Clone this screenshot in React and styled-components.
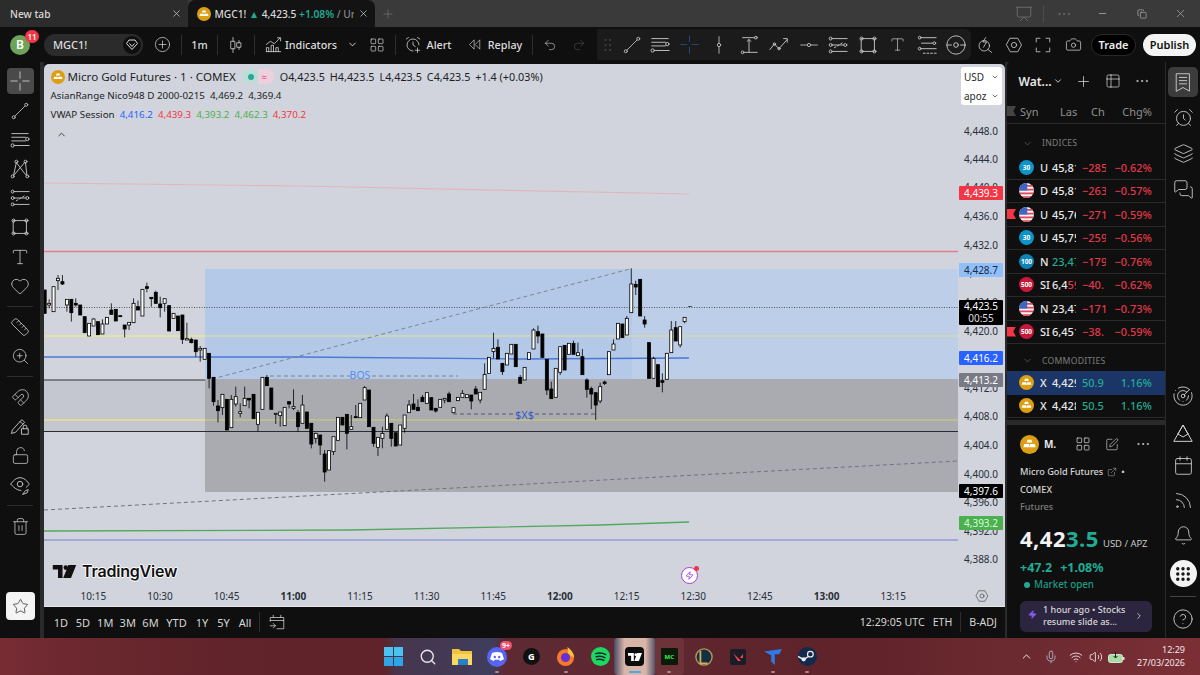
import React from "react";
import styled, { createGlobalStyle } from "styled-components";
import {
  X, Plus, ChevronDown, ChevronRight, ChevronUp, Undo2, Redo2, Camera, Minus, Copy, AlarmClock, Layers, MessagesSquare,
  Radar, Calendar, Rss, Bell, Grip, CircleHelp, Star, Trash2, Magnet, LockOpen, Ruler, ZoomIn, Heart, Type,
  LayoutGrid, SquarePen, ExternalLink, Mic, Wifi, Volume2, Search, Zap, Table2, Presentation, Ellipsis
} from "lucide-react";

const Global = createGlobalStyle`
  html, body { margin: 0; padding: 0; background: #0f0f0f; overflow: hidden; }
  body { font-family: "Noto Sans", "Open Sans", Arial, sans-serif; }
  * { box-sizing: border-box; }
`;

const Page = styled.div`
  width: 1200px; height: 675px; display: flex; flex-direction: column; background: #0f0f0f; overflow: hidden;
`;

/* ---------- browser tabs ---------- */
const TabStrip = styled.div`
  height: 27px; flex: none; display: flex; align-items: stretch; background: #3a3a3a; color: #d8d8d8; font-size: 10.200px;
`;
const Tab = styled.div`
  width: 187.5px; flex: none; display: flex; align-items: center; gap: 4px; padding: 0 6px 0 ${p => p.$pl}px;
  background: ${p => (p.$active ? "#131313" : "#2c2c2c")}; border-radius: ${p => (p.$active ? "7px 7px 0 0" : "0")};
  font-weight: 500; white-space: nowrap; overflow: hidden;
`;
const TabLabel = styled.span`
  flex: 1; overflow: hidden; white-space: nowrap; color: ${p => p.$c || "inherit"};
`;
const Colored = styled.span`
  color: ${p => p.$c}; font-weight: ${p => p.$b || "inherit"};
`;
const WindowControls = styled.div`
  margin-left: auto; display: flex; align-items: center; color: #b8b8b8;
`;
const WinSlot = styled.div`
  width: ${p => p.$w}px; display: flex; justify-content: center; align-items: center; color: ${p => p.$c || "inherit"};
`;
const WinDivider = styled.div`
  width: 1px; height: 18px; background: #4c4c4c;
`;
const NewTab = styled.div`
  width: 26px; display: flex; align-items: center; justify-content: center; color: #777;
`;

/* ---------- top toolbar ---------- */
const Toolbar = styled.div`
  height: 35px; flex: none; display: flex; align-items: center; background: #0f0f0f; color: #dcdcdc; font-size: 10.8px; font-weight: 500;
`;
const Avatar = styled.div`
  position: relative; width: 20px; height: 20px; margin: 0 14px 0 10px; border-radius: 50%; background: #6ea35a; color: #fff; flex: none;
  display: flex; align-items: center; justify-content: center; font-size: 12px; font-weight: 600;
`;
const AvatarBadge = styled.span`
  position: absolute; top: -5px; right: -9px; width: 14px; height: 13px; border-radius: 7px; background: #f23645; color: #fff;
  font-size: 8px; display: flex; align-items: center; justify-content: center; font-weight: 600;
`;
const SymbolPill = styled.div`
  width: 99px; height: 22px; flex: none; border-radius: 11px; background: #2b2b2b; display: flex; align-items: center;
  justify-content: space-between; padding: 0 2px 0 9px; font-size: 11px; color: #ddd;
`;
const DiamondDot = styled.span`
  width: 18px; height: 18px; border-radius: 50%; background: #0f0f0f; display: flex; align-items: center; justify-content: center;
`;
const Slot = styled.div`
  width: ${p => p.$w}px; flex: none; display: flex; align-items: center; justify-content: center; gap: 4px; height: 100%;
  padding-left: ${p => p.$pl || 0}px; color: ${p => p.$c || "inherit"}; white-space: nowrap;
`;
const VBar = styled.div`
  width: 1px; height: 20px; flex: none; background: #2e2e2e;
`;
const DrawGroup = styled.div`
  margin-left: auto; width: 374px; height: 31px; flex: none; background: #1b1b1b; border-radius: 0 6px 6px 0; display: flex; align-items: center;
  color: #c8c8c8;
`;
const TradeBtn = styled.div`
  width: 45px; height: 22px; flex: none; border-radius: 11px; background: #000; border: 1px solid #2a2a2a; color: #eee;
  display: flex; align-items: center; justify-content: center; font-weight: 600; font-size: 11px; margin-left: 3px;
`;
const PublishBtn = styled(TradeBtn)`
  width: 53px; background: #f4f4f4; color: #111; border: none; margin: 0 4px 0 7px;
`;

/* ---------- main ---------- */
const Main = styled.div`
  flex: 1; min-height: 0; display: flex; background: #2a2a2a;
`;
const LeftBar = styled.div`
  width: 40px; margin-right: 4px; background: #0f0f0f; display: flex; flex-direction: column; align-items: center; color: #c8c8c8; padding-top: 6px; flex: none;
`;
const ToolSlot = styled.div`
  width: 27px; height: ${p => p.$h || 29.2}px; flex: none; display: flex; align-items: center; justify-content: center;
  background: ${p => (p.$active ? "#4a4a4a" : "transparent")}; border-radius: 4px;
`;
const HBar = styled.div`
  width: 26px; height: 1px; flex: none; background: #2e2e2e; margin: 5.500px 0;
`;
const StarTile = styled.div`
  width: 29px; height: 28px; margin-top: auto; margin-bottom: 18px; background: #f4f4f4; color: #222; border-radius: 4px; display: flex;
  align-items: center; justify-content: center; flex: none;
`;
const ChartCol = styled.div`
  width: 961px; flex: none; display: flex; flex-direction: column; padding-top: 2px; background: #0f0f0f;
`;
const ChartBox = styled.div`
  height: 522px; flex: none; position: relative; background: #d1d4dc; border-radius: 5px 5px 0 0; overflow: hidden;
`;
const ChartSvg = styled.svg`
  display: block; width: 961px; height: 522px; font-family: "Noto Sans", Arial, sans-serif;
`;
const Legend = styled.div`
  position: absolute; left: 6.500px; top: 3px; color: #1d1f26; display: flex; flex-direction: column;
`;
const LegendRow = styled.div`
  height: 19px; display: flex; align-items: center; gap: ${p => p.$g || 5}px; white-space: nowrap; font-size: ${p => p.$fs || 9.8}px;
`;
const StatusPill = styled.span`
  width: 32px; height: 15px; border-radius: 7px; background: linear-gradient(90deg, #bfdcd8 50%, #ecd0de 50%); display: flex; align-items: center; justify-content: space-around;
  padding: 0 3px; font-size: 10px; color: #ee4f80; margin: 0 3px 0 3px;
`;
const GreenDot = styled.span`
  width: 6px; height: 6px; border-radius: 50%; background: #22ab94; flex: none;
`;
const CollapseBtn = styled.div`
  width: 18px; height: 14px; margin-top: 3px; margin-left: 2px; display: flex; align-items: center; justify-content: center; color: #333;
`;
const UnitBox = styled.div`
  position: absolute; right: 3px; top: 3px; width: 41px; height: 38px; background: #fff; border-radius: 3px; padding: 0 3px;
  font-size: 10px; color: #2a2a2a; display: flex; flex-direction: column; justify-content: space-around;
`;
const UnitRow = styled.div`
  display: flex; align-items: center; justify-content: space-between;
`;
const LogoWrap = styled.div`
  position: absolute; left: 8px; top: 497px; display: flex; align-items: center; gap: 5px; color: #111;
`;
const LogoText = styled.span`
  font-family: Inter, "Noto Sans", sans-serif; font-size: 16px; font-weight: 600; letter-spacing: -0.2px;
  text-shadow: 1px 0 0 #fff, -1px 0 0 #fff, 0 1px 0 #fff, 0 -1px 0 #fff;
`;
const Flash = styled.div`
  position: absolute; left: 637px; top: 503px; width: 17px; height: 17px; border-radius: 50%; background: #fff; border: 1.500px solid #a63ad0;
  display: flex; align-items: center; justify-content: center; color: #8a2be2;
`;
const FlashDot = styled.span`
  position: absolute; top: -2px; right: -2px; width: 5px; height: 5px; border-radius: 50%; background: #f23645;
`;
const TimeAxis = styled.div`
  height: 21px; flex: none; display: flex; align-items: center; background: #d1d4dc; color: #2a2e39; font-size: 10px; padding-left: 16px;
  border-bottom: 1px solid #e6e8ee;
`;
const TimeLabel = styled.span`
  width: 66.67px; text-align: center; flex: none; font-weight: ${p => (p.$b ? 700 : 400)};
`;
const AxisGear = styled.span`
  margin-left: auto; margin-right: 16px; display: flex; color: #333;
`;
const BottomBar = styled.div`
  height: 30px; flex: none; background: #0f0f0f; display: flex; align-items: center; color: #d6d6d6; font-size: 11px; padding-left: 6px;
`;
const Range = styled.span`
  width: ${p => p.$w}px; text-align: center; flex: none;
`;
const BottomRight = styled.div`
  margin-left: auto; display: flex; align-items: center; gap: 8px; padding-right: 8px; font-size: 10.600px; white-space: nowrap;
`;

/* ---------- watchlist ---------- */
const Watch = styled.div`
  width: 158px; margin-left: 2px; flex: none; background: #0f0f0f; border-radius: 4px 0 0 0; display: flex; flex-direction: column; color: #e8e8e8; overflow: hidden;
`;
const WatchHead = styled.div`
  height: 36px; flex: none; display: flex; align-items: center; font-size: 12px; font-weight: 600; padding-left: 13px; margin-top: 1px;
`;
const ColHead = styled.div`
  position: relative; height: 25px; flex: none; display: grid; grid-template-columns: 40px 31px 1fr auto; padding: 0 13px; align-items: center; color: #8f8f8f; font-size: 11px;
  border-bottom: 1px solid #2a2a2a;
`;
const ColFlag = styled.span`
  position: absolute; left: 0; top: 7px; width: 9px; height: 10px; background: #444; clip-path: polygon(0 0, 100% 0, 70% 50%, 100% 100%, 0 100%);
`;
const Section = styled.div`
  height: ${p => p.$h}px; flex: none; display: flex; align-items: center; gap: 9px; padding: 6px 0 0 15px; color: #7c7c7c; font-size: 8.700px; letter-spacing: .2px;
`;
const Row = styled.div`
  position: relative; height: 23.500px; flex: none; display: grid; grid-template-columns: 16px 17px 30px 30px 1fr; align-items: center; padding: 0 13px 0 12px;
  border-bottom: ${p => (p.$sel ? "none" : "1px solid #2a2a2a")}; background: ${p => (p.$sel ? "#1a3566" : "transparent")}; font-size: 11px; font-weight: 500; white-space: nowrap;
`;
const RowSym = styled.span`
  padding-left: 5px; overflow: hidden; width: 16px; font-weight: 500;
`;
const RowClip = styled.span`
  overflow: hidden; width: 24px;
`;
const RowPct = styled.span`
  text-align: right; color: ${p => p.$c};
`;
const RowFlag = styled.span`
  position: absolute; left: 0; top: 6px; width: 9px; height: 10px; background: #f23645; clip-path: polygon(0 0, 100% 0, 70% 50%, 100% 100%, 0 100%);
`;
const RoundIcon = styled.span`
  width: 15px; height: 15px; border-radius: 50%; background: ${p => p.$bg}; color: #fff; font-size: 6.500px; font-weight: 700; display: flex;
  align-items: center; justify-content: center; overflow: hidden;
`;
const Thick = styled.div`
  height: 5px; margin-top: 2px; flex: none; background: #2a2a2a;
`;
const Details = styled.div`
  flex: 1; padding: 9px 13px 0 13px; display: flex; flex-direction: column;
`;
const DetailHead = styled.div`
  height: 20px; flex: none; display: flex; align-items: center; font-size: 10px; font-weight: 700;
`;
const DetailName = styled.div`
  margin-top: 9px; font-size: 9.200px; line-height: 17.500px; color: #d6d6d6; font-weight: 500; flex: none;
`;
const DetailName2 = styled.div`
  display: flex; align-items: center; gap: 4px;
`;
const Muted = styled.div`
  color: #7c7c7c;
`;
const BigPrice = styled.div`
  margin-top: 10px; flex: none; display: flex; align-items: baseline; font-size: 22px; font-weight: 700; color: #f2f2f2; letter-spacing: .5px; font-family: "Open Sans", sans-serif; line-height: 24px; white-space: nowrap;
`;
const BigUnit = styled.span`
  font-size: 9.500px; font-weight: 500; margin-left: 4px; letter-spacing: 0; color: #d0d0d0;
`;
const Change = styled.div`
  margin-top: 4px; flex: none; color: #22ab94; font-size: 12.500px; line-height: 15px; font-weight: 700; display: flex; gap: 8px;
`;
const OpenRow = styled.div`
  margin-top: 3px; flex: none; padding-left: 4px; color: #1c9a85; font-size: 9.800px; line-height: 14px; font-weight: 500; display: flex; align-items: center; gap: 4px;
`;
const News = styled.div`
  margin-top: 9px; height: 31px; flex: none; border-radius: 6px; background: #2c2540; display: flex; align-items: center; padding: 0 8px 0 8px; gap: 6px; font-size: 9px; line-height: 12.500px; color: #d8d8d8; font-weight: 500; white-space: nowrap;
`;
const Grow = styled.div`
  flex: 1;
`;

/* ---------- right rail ---------- */
const Rail = styled.div`
  flex: 1; border-left: 1px solid #2a2a2a; background: #0f0f0f; color: #cfcfcf; display: flex; flex-direction: column; align-items: center; padding-top: 5px;
`;
const RailSlot = styled.div`
  width: 30px; height: ${p => p.$h || 35}px; flex: none; display: flex; align-items: center; justify-content: center; border-radius: 5px; background: ${p => (p.$active ? "#3c3c3c" : "transparent")};
`;
const RailSpacer = styled.div`
  height: ${p => p.$h}px; flex: none;
`;
const GripCircle = styled.div`
  width: 27px; height: 27px; border-radius: 50%; background: #f4f4f4; color: #111; display: flex; align-items: center; justify-content: center; flex: none; margin: 7px 0 9px;
`;
const RailLine = styled.div`
  width: 26px; height: 1px; background: #444; flex: none; margin-bottom: 4px;
`;

/* ---------- taskbar ---------- */
const Taskbar = styled.div`
  height: 37px; flex: none; display: flex; align-items: center; padding-left: 376px; color: #eee;
  background: linear-gradient(90deg, #772c34 0%, #6a272e 8%, #5f2329 22%, #5f2329 32%, #47354c 33%, #3f3d5c 41%, #5d2a34 42%, #5f2329 70%, #6b2a30 85%, #7b2f36 100%);
`;
const TaskIcon = styled.div`
  position: relative; width: 34.500px; height: 37px; flex: none; display: flex; align-items: center; justify-content: center;
  &::before {
    content: ""; position: absolute; top: 0; bottom: 0; left: ${p => p.$gl || 0}px; right: ${p => p.$gr || 0}px; border-radius: 4px;
    background: ${p => p.$bg || "transparent"};
  }
  & > * { position: relative; }
`;
const Pip = styled.span`
  position: absolute !important; bottom: 2px; left: 50%; margin-left: ${p => (p.$on ? -6 : -2)}px; width: ${p => (p.$on ? 12 : 4)}px; height: 2px; border-radius: 1px; background: ${p => (p.$on ? "#4aa8e8" : "#a88")};
`;
const Tile = styled.span`
  width: ${p => p.$s || 17}px; height: ${p => p.$s || 17}px; border-radius: ${p => p.$r ?? 3}px; background: ${p => p.$bg}; color: ${p => p.$c || "#fff"}; display: flex; align-items: center; justify-content: center;
  font-size: ${p => p.$fs || 8}px; font-weight: 800; overflow: hidden;
`;
const CountBadge = styled.span`
  position: absolute !important; top: 3px; right: 2px; background: #f0506e; color: #fff; font-size: 7px; border-radius: 6px; padding: 0 2px; font-weight: 700;
`;
const Tray = styled.div`
  margin-left: auto; display: flex; align-items: center; padding-right: 15px; color: #f0e6e6;
`;
const TraySlot = styled.div`
  width: ${p => p.$w || 24}px; display: flex; justify-content: center; align-items: center;
`;
const Clock = styled.div`
  width: 50px; margin-left: 7px; text-align: right; font-size: 9px; line-height: 12.500px; white-space: nowrap;
`;

/* ---------- drawings ---------- */
const I = ({ s = 20, sw = 1, vb = "0 0 24 24", children }) => (
  <svg width={s} height={s} viewBox={vb} fill="none" stroke="currentColor" strokeWidth={sw} strokeLinecap="round" strokeLinejoin="round">{children}</svg>
);
const Gold = ({ s = 15 }) => (
  <svg width={s} height={s} viewBox="0 0 20 20">
    <circle cx="10" cy="10" r="10" fill="#dc9f14" />
    <path d="M8 5h4l1 3H7zM4.500 9.500h5l.5 3.500H3.500zM10.500 9.500h5l1 3.500h-6.500z" fill="#fff" />
  </svg>
);
const USFlag = () => (
  <svg width="15" height="15" viewBox="0 0 20 20">
    <defs><clipPath id="f"><circle cx="10" cy="10" r="10" /></clipPath></defs>
    <g clipPath="url(#f)">
      <rect width="20" height="20" fill="#f4f4f4" />
      <path d="M0 2.500h20v2.500H0zM0 7.500h20V10H0zM0 12.500h20V15H0zM0 17.500h20V20H0z" fill="#e0455a" />
      <rect width="11" height="10" fill="#3a66c8" />
    </g>
  </svg>
);
const TVGlyph = ({ w = 22, h = 13, c = "currentColor" }) => (
  <svg width={w} height={h} viewBox="0 0 36 20" fill={c}>
    <path d="M0 0h15v20H8V7H0zM24 0h12l-8 20H16z" />
    <circle cx="20" cy="4" r="3.500" />
  </svg>
);
const Crosshair = ({ c = "currentColor", s = 22 }) => (
  <I s={s}><g stroke={c}><path d="M12 2v7M12 15v7M2 12h7M15 12h7" /></g></I>
);
const HexGear = ({ s = 18 }) => (<I s={s}><path d="M7 3h10l5 9-5 9H7l-5-9z" /><circle cx="12" cy="12" r="3.500" /></I>);
const TrendLine = ({ s = 20 }) => (<I s={s}><circle cx="4.500" cy="19.500" r="1.800" /><circle cx="19.500" cy="4.500" r="1.800" /><path d="M6 18 18 6" /></I>);
const Channel = ({ s = 22 }) => (<I s={s}><path d="M3 5h18M3 9h15M3 13h15M6 18h16" /><circle cx="20" cy="11" r="1.800" /><circle cx="4" cy="18" r="1.800" /></I>);
const Pitch = ({ s = 22 }) => (<I s={s}><circle cx="8" cy="4" r="1.600" /><circle cx="18" cy="4" r="1.600" /><circle cx="4" cy="20" r="1.600" /><circle cx="20" cy="20" r="1.600" /><path d="M8 5 5 19M18 5l1.500 14M8 5l10 13M17 5 6 18" /></I>);
const Fib = ({ s = 22 }) => (<I s={s}><circle cx="4" cy="5" r="1.600" /><circle cx="4" cy="12" r="1.600" /><circle cx="4" cy="19" r="1.600" /><circle cx="20" cy="12" r="1.600" /><path d="M6 5h16M6 12h12M6 19h16" /><path d="M8 15l10-6" strokeDasharray="2 2" /></I>);
const Rect = ({ s = 22 }) => (<I s={s}><rect x="5" y="5" width="14" height="14" /><circle cx="5" cy="5" r="1.700" /><circle cx="19" cy="5" r="1.700" /><circle cx="5" cy="19" r="1.700" /><circle cx="19" cy="19" r="1.700" /></I>);
const Measure = ({ s = 22 }) => (<I s={s}><path d="M5 4h13M12 6v14M7 20h14" /><circle cx="19.500" cy="4" r="1.500" /><circle cx="5" cy="20" r="1.500" /><path d="m10 8 2-2 2 2" /></I>);
const Poly = ({ s = 22 }) => (<I s={s}><path d="M2 17l5-6 5 5 9-10M17 5h4v4" /><circle cx="7" cy="11" r="1.300" /><circle cx="12" cy="16" r="1.300" /></I>);
const Dash = ({ s = 20 }) => (<I s={s}><path d="M2 12h7M15 12h7" /><circle cx="12" cy="12" r="2" /></I>);
const VLine = ({ s = 20 }) => (<I s={s}><path d="M12 2v8M12 14v8" /><circle cx="12" cy="12" r="2" /></I>);
const Candle = ({ s = 18 }) => (<I s={s}><path d="M8 2v5M8 17v5M16 6v3M16 15v3" /><rect x="5.500" y="7" width="5" height="10" /><rect x="13.500" y="9" width="5" height="6" /></I>);
const Indicator = ({ s = 19 }) => (<I s={s}><path d="M3 12l5-4 5 3 7-7M17 3.500h4v4" /><path d="M3 21v-5h3v5M9 21v-8h3v8M15 21v-5h3v5M3 21h18" /></I>);
const Replay = ({ s = 15 }) => (<I s={s}><path d="M11 5 4 12l7 7zM20 5l-7 7 7 7z" /></I>);
const AlertI = ({ s = 18 }) => (<I s={s}><path d="M20 12a8 8 0 1 0-8 8" /><path d="M12 8v4l3 2M3 4l3-2M21 4l-3-2M18 16v6M15 19h6" /></I>);
const Lab = ({ s = 18 }) => (<I s={s}><circle cx="11" cy="13" r="7" /><path d="m16 18 5 4M13 2l-4 6h5l-4 7" /></I>);
const Watchlist = ({ s = 22 }) => (<I s={s}><path d="M5 3h14v19l-7-4-7 4z" /><path d="M8 7h8M8 10.500h8M8 14h8" /></I>);
const PenLock = ({ s = 22 }) => (<I s={s}><path d="M4 16 14 5l3 3L7 19l-4 1zM12 7l3 3" /><rect x="14" y="15" width="7" height="6" /><path d="M15.500 15v-2a2 2 0 0 1 4 0v2" /></I>);
const EyeBrush = ({ s = 22 }) => (<I s={s}><path d="M2 11s4-7 10-7 10 7 10 7-1 2-3 3.500M13 18c-6 0-11-7-11-7" /><circle cx="12" cy="11" r="3" /><path d="M15 22l3-4 3-1-1 3z" /></I>);
const Target = ({ s = 22 }) => (<I s={s}><circle cx="12" cy="12" r="10" /><circle cx="12" cy="12" r="2.500" /><path d="M2 12h5M17 12h5" /></I>);
const FibList = ({ s = 22 }) => (<I s={s}><path d="M6 4h16M6 10h12M6 16h16" /><circle cx="4" cy="4" r="1.500" /><circle cx="20" cy="10" r="1.500" /><circle cx="4" cy="16" r="1.500" /><path d="M8 21h14" strokeDasharray="2 2" /></I>);
const Mountains = ({ s = 24 }) => (<I s={s}><path d="M3 22 12 6l9 16zM7 15l5-9 5 9" /><path d="M7 15l5 3 5-3" /></I>);
const CalArrow = ({ s = 18 }) => (<I s={s}><path d="M3 11V6h18v15H12M7 3v3M17 3v3M3 10h18M3 17h7M7 14l3 3-3 3" /></I>);

/* ---------- chart data (page pixels) ---------- */
const A = [[90,160,90,160,0],[118,145,130,135,1],[80,155,80,155,1],[45,90,55,62,1],[45,75,65,72,0],[118,155,118,135,1],[118,185,118,158,0],[115,140,130,135,0],[135,165,135,165,0],[170,218,170,218,0],[190,228,190,228,1],[175,198,177,198,1],[185,224,185,224,0],[178,222,192,222,1],[172,192,172,192,1],[130,163,150,163,0],[148,183,148,183,0],[167,168,167,168,0],[195,232,195,207,0],[187,210,187,195,1],[115,188,130,188,1],[122,150,140,150,0],[88,168,88,168,1],[68,97,80,85,0],[112,140,112,116,0],[92,130,97,130,0],[110,172,132,143,0],[116,155,116,130,1],[137,213,137,213,0],[160,175,160,175,1],[168,212,168,212,0],[165,252,165,238,0],[188,240,236,240,1],[233,250,238,248,0],[240,290,240,275,0],[258,305,265,270,1],[265,298,265,298,1],[280,385,280,355,0],[352,437,352,425,0],[420,487,438,452,0],[403,465,403,443,1],[418,510,418,510,0],[405,503,418,503,1],[380,440,410,432,1],[430,472,455,460,1],[380,437,415,437,1],[415,445,415,420,0],[403,476,403,476,0],[457,514,457,493,1],[352,448,352,448,1],[345,377,352,377,0],[384,448,384,448,0],[460,492,460,463,1],[456,500,456,467,1],[442,497,442,497,1],[425,445,425,432,0],[388,450,440,445,1],[450,515,458,500,0],[405,490,435,490,1],[456,505,456,505,0],[490,565,490,552,0],[518,550,520,535,1],[525,585,525,555,0],[570,665,582,636,0],[572,630,572,630,1],[530,585,530,575,1],[472,541,472,541,1],[472,495,472,495,0],[463,568,463,520,0],[465,508,500,508,1],[435,473,470,473,0],[430,473,430,473,1],[378,420,383,420,1],[390,500,390,500,0],[502,560,502,550,0]];
const B = [[172,228,172,202,1],[140,205,160,175,1],[100,148,108,148,1],[130,200,130,175,0],[158,198,158,198,0],[135,195,135,195,1],[105,158,105,145,1],[60,98,75,98,1],[42,88,72,88,0],[58,92,82,92,0],[45,65,52,65,0],[38,70,38,70,1],[53,90,53,90,0],[85,98,85,93,0],[58,82,58,82,1],[55,70,55,60,1],[35,65,42,65,0],[83,98,83,98,1],[52,62,52,62,1],[30,52,40,52,1]];
const C = [[404,413,404,413,1],[405,448,405,423,0],[378,402,387,402,0],[397,430,397,420,1],[310,388,343,388,1],[292,340,292,340,1],[218,295,265,275,1],[238,297,262,297,0],[310,345,310,335,0],[280,315,280,315,1],[253,282,253,282,1],[253,320,253,320,0],[345,370,352,370,0],[322,360,322,360,1],[278,298,278,298,1],[205,267,210,267,1],[197,250,215,228,0],[222,292,222,292,0],[298,405,298,390,0],[365,416,387,416,0],[325,412,325,412,1],[260,345,260,337,1],[256,330,256,330,0],[250,283,250,283,1],[242,283,250,283,0],[248,287,278,287,1],[267,344,290,344,0],[355,413,360,388,0],[380,447,386,402,0],[398,480,398,435,0],[368,430,380,423,1],[362,375,366,370,0],[275,344,275,344,1],[238,270,252,270,1],[190,237,190,237,1],[192,233,192,233,0],[168,225,175,225,1],[25,158,72,158,1],[62,105,73,81,0],[58,168,58,168,0],[168,203,180,192,0],[248,355,248,355,0],[290,355,295,355,1],[314,380,314,380,0],[340,397,362,367,0],[280,358,280,358,1],[183,278,210,278,1],[183,243,203,243,0],[200,263,200,255,1],[172,190,172,185,1]];
const conv = (list, y0, start) => list.map((c, k) => ({ x: 44.67 + 4.444 * (start + k), wt: y0 + c[0] / 3, wb: y0 + c[1] / 3, bt: y0 + c[2] / 3, bb: y0 + c[3] / 3, w: c[4] }));
const candles = [...conv(A, 260, 0), ...conv(B, 380, 75), ...conv(C, 260, 95)];
const axis = [["4,448.0", 131], ["4,444.0", 159], ["4,440.0", 187], ["4,436.0", 216], ["4,432.0", 245], ["4,428.0", 273], ["4,424.0", 302], ["4,420.0", 331], ["4,412.0", 388], ["4,408.0", 416], ["4,404.0", 445], ["4,400.0", 474], ["4,396.0", 502], ["4,392.0", 531], ["4,388.0", 559]];
const badges = [["4,439.3", 193, "#f23645", "#fff"], ["4,428.7", 270, "#90bff9", "#1a2a44"], ["4,416.2", 358, "#2962ff", "#fff"], ["4,413.2", 380, "#787b86", "#fff"], ["4,397.6", 491, "#000", "#fff"], ["4,393.2", 523, "#4caf50", "#d8ffd8"]];

const Chart = () => (
  <ChartSvg viewBox="44 64 961 522">
    <rect x="44" y="380" width="161" height="51" fill="#c4c7cf" />
    <rect x="205" y="269" width="427" height="110" fill="#b4c9e8" />
    <rect x="632" y="269" width="326" height="110" fill="#bccee8" />
    <rect x="205" y="379" width="753" height="113" fill="#a9abb1" />
    <path d="M44 183 L300 186 L689 194" stroke="#e3b5bf" strokeWidth="1.200" fill="none" />
    <path d="M44 251.500H958" stroke="#de7f8a" strokeWidth="1.400" />
    <path d="M44 336H205" stroke="#e2e2a8" strokeWidth="2" />
    <path d="M205 336H958" stroke="#cdd6ba" strokeWidth="2" />
    <path d="M44 420H205" stroke="#dcdc9c" strokeWidth="2" />
    <path d="M205 420H958" stroke="#bdbd8e" strokeWidth="2" />
    <path d="M44 357 L300 357 L520 359 L689 358" stroke="#4a78d8" strokeWidth="1.400" fill="none" />
    <path d="M44 380H205" stroke="#333" strokeWidth="1.200" />
    <path d="M44 431.500H958" stroke="#2c2c30" strokeWidth="1.200" />
    <path d="M44 307.500H958" stroke="#555" strokeWidth="1" strokeDasharray="1 1.500" />
    <path d="M44 531 L350 530 L600 525 L689 522" stroke="#55a860" strokeWidth="1.300" fill="none" />
    <path d="M44 540H958" stroke="#6f7fd8" strokeWidth="1" />
    <path d="M44 510 L958 461" stroke="#70737a" strokeWidth="1" strokeDasharray="4 3" />
    <path d="M212 379 L630 269" stroke="#7d8590" strokeWidth="1" strokeDasharray="4 3" />
    <path d="M270 376H350M372 376H458" stroke="#7d8590" strokeWidth="1" strokeDasharray="4 3" />
    <path d="M453 414H515M535 414H595" stroke="#55585e" strokeWidth="1" strokeDasharray="4 3" />
    <text x="360" y="379" fontSize="10.500" textAnchor="middle" fill="#5a8ce8">BOS</text>
    <text x="524.500" y="418.500" fontSize="11" textAnchor="middle" fill="#3556c8">$X$</text>
    {candles.map((c, i) => (
      <g key={i} stroke="#000" strokeWidth="0.800">
        <path d={`M${c.x} ${c.wt}V${c.wb}`} />
        <rect x={c.x - 1.500} y={c.bt} width="3" height={Math.max(c.bb - c.bt, 1)} fill={c.w ? "#fff" : "#000"} />
      </g>
    ))}
    <path d="M688 306.500h4" stroke="#555" />
    {axis.map(([t, y]) => (
      <text key={t} x="998" y={y + 3.500} textAnchor="end" fontSize="10" fill="#2a2e39">{t}</text>
    ))}
    {badges.map(([t, y, bg, fg]) => (
      <g key={t}>
        <rect x="959" y={y - 7} width="44" height="14" fill={bg} rx="1" />
        <text x="981" y={y + 3.500} textAnchor="middle" fontSize="10" fill={fg}>{t}</text>
      </g>
    ))}
    <rect x="959" y="300" width="44" height="25" fill="#000" rx="1" />
    <text x="981" y="310" textAnchor="middle" fontSize="10" fill="#fff">4,423.5</text>
    <text x="981" y="321.500" textAnchor="middle" fontSize="10" fill="#ddd">00:55</text>
  </ChartSvg>
);

const rows = [
  { icon: "30", sym: "U", last: "45,81", ch: "−285", pct: "−0.62%" },
  { icon: "us", sym: "D", last: "45,81", ch: "−263", pct: "−0.57%" },
  { icon: "us", sym: "U", last: "45,76", ch: "−271", pct: "−0.59%", flag: true },
  { icon: "30", sym: "U", last: "45,75", ch: "−259", pct: "−0.56%" },
  { icon: "100", sym: "N", last: "23,47", ch: "−179", pct: "−0.76%", green: true },
  { icon: "500", sym: "SI", last: "6,4", lastRed: "59", ch: "−40.", pct: "−0.62%" },
  { icon: "us", sym: "N", last: "23,47", ch: "−171", pct: "−0.73%" },
  { icon: "500", sym: "SI", last: "6,451", ch: "−38.", pct: "−0.59%", flag: true },
];
const iconBg = { "30": "#0d94c8", "100": "#0d84b8", "500": "#c8193a" };
const RED = "#e0394a";
const GREEN = "#22ab94";

const times = [["10:15"], ["10:30"], ["10:45"], ["11:00", 1], ["11:15"], ["11:30"], ["11:45"], ["12:00", 1], ["12:15"], ["12:30"], ["12:45"], ["13:00", 1], ["13:15"]];
const ranges = [["1D", 22], ["5D", 22], ["1M", 22.500], ["3M", 22.500], ["6M", 23], ["YTD", 29], ["1Y", 22], ["5Y", 21], ["All", 22]];

export default function App() {
  return (
    <Page>
      <Global />
      <TabStrip>
        <Tab $pl={10}>
          <TabLabel>New tab</TabLabel>
          <X size={11} strokeWidth={1.500} />
        </Tab>
        <Tab $pl={9} $active>
          <Gold s={14} />
          <TabLabel>MGC1! <Colored $c={GREEN}>▲</Colored> 4,423.5 <Colored $c={GREEN} $b="600">+1.08%</Colored> <Colored $c="#888">/ Un</Colored></TabLabel>
          <X size={11} strokeWidth={1.500} />
        </Tab>
        <NewTab><Plus size={14} strokeWidth={1.200} /></NewTab>
        <WindowControls>
          <WinSlot $w={39} $c="#777"><Presentation size={18} strokeWidth={1} /></WinSlot>
          <WinDivider />
          <WinSlot $w={39} $c="#777"><Ellipsis size={16} strokeWidth={1} /></WinSlot>
          <WinSlot $w={39}><Minus size={11} strokeWidth={1.500} /></WinSlot>
          <WinSlot $w={39}><Copy size={10} strokeWidth={1.500} /></WinSlot>
          <WinSlot $w={39}><X size={13} strokeWidth={1.200} /></WinSlot>
        </WindowControls>
      </TabStrip>

      <Toolbar>
        <Avatar>B<AvatarBadge>11</AvatarBadge></Avatar>
        <SymbolPill>MGC1!
          <DiamondDot>
            <svg width="12" height="11" viewBox="0 0 24 22" fill="none" stroke="#ddd" strokeWidth="2"><path d="M6 2h12l5 7-11 12L1 9z" /><path d="M7 9l5 6 5-6" /></svg>
          </DiamondDot>
        </SymbolPill>
        <Slot $w={38}><I s={17} sw={1}><circle cx="12" cy="12" r="10" /><path d="M12 7v10M7 12h10" /></I></Slot>
        <VBar />
        <Slot $w={35}>1m</Slot>
        <VBar />
        <Slot $w={36}><Candle /></Slot>
        <VBar />
        <Slot $w={32} $pl={4}><Indicator /></Slot>
        <Slot $w={48}>Indicators</Slot>
        <Slot $w={34}><ChevronDown size={11} /></Slot>
        <Slot $w={16}><LayoutGrid size={16} strokeWidth={1} /></Slot>
        <Slot $w={10} />
        <VBar />
        <Slot $w={31} $pl={3}><AlertI /></Slot>
        <Slot $w={24}>Alert</Slot>
        <Slot $w={38} $pl={8}><Replay /></Slot>
        <Slot $w={32}>Replay</Slot>
        <Slot $w={11} />
        <VBar />
        <Slot $w={34}><Undo2 size={14} strokeWidth={1} /></Slot>
        <Slot $w={24} $c="#555"><Redo2 size={14} strokeWidth={1} /></Slot>

        <DrawGroup>
          <Slot $w={21.500} $c="#444">
            <svg width="8" height="14" viewBox="0 0 8 14" fill="currentColor"><circle cx="1.500" cy="2" r="1" /><circle cx="6" cy="2" r="1" /><circle cx="1.500" cy="7" r="1" /><circle cx="6" cy="7" r="1" /><circle cx="1.500" cy="12" r="1" /><circle cx="6" cy="12" r="1" /></svg>
          </Slot>
          <Slot $w={26.500}><TrendLine /></Slot>
          <Slot $w={29.500}><Channel /></Slot>
          <Slot $w={30}><Crosshair c="#2a4a8c" s={21} /></Slot>
          <Slot $w={29.500}><VLine /></Slot>
          <Slot $w={30}><Measure /></Slot>
          <Slot $w={30}><Poly /></Slot>
          <Slot $w={29}><Dash /></Slot>
          <Slot $w={29.500}><Fib /></Slot>
          <Slot $w={30}><Rect /></Slot>
          <Slot $w={29}><Type size={17} strokeWidth={1} /></Slot>
          <Slot $w={30}><FibList /></Slot>
          <Slot $w={29.500}><Target /></Slot>
        </DrawGroup>
        <Slot $w={28.500}><Lab /></Slot>
        <Slot $w={29}><HexGear /></Slot>
        <Slot $w={29.500}>
          <I s={18}><path d="M3 8V3h5M16 3h5v5M21 16v5h-5M8 21H3v-5" /></I>
        </Slot>
        <Slot $w={30}><Camera size={17} strokeWidth={1} /></Slot>
        <TradeBtn>Trade</TradeBtn>
        <PublishBtn>Publish</PublishBtn>
      </Toolbar>

      <Main>
        <LeftBar>
          <ToolSlot $active $h={26}><Crosshair /></ToolSlot>
          <RailSpacer $h={2} />
          <ToolSlot><TrendLine /></ToolSlot>
          <ToolSlot><Channel /></ToolSlot>
          <ToolSlot><Pitch /></ToolSlot>
          <ToolSlot><Fib /></ToolSlot>
          <ToolSlot><Rect /></ToolSlot>
          <ToolSlot><Type size={20} strokeWidth={1} /></ToolSlot>
          <ToolSlot><Heart size={20} strokeWidth={1} /></ToolSlot>
          <HBar />
          <ToolSlot><Ruler size={20} strokeWidth={1} /></ToolSlot>
          <ToolSlot><ZoomIn size={19} strokeWidth={1} /></ToolSlot>
          <HBar />
          <ToolSlot><Magnet size={19} strokeWidth={1} /></ToolSlot>
          <ToolSlot><PenLock /></ToolSlot>
          <ToolSlot><LockOpen size={19} strokeWidth={1} /></ToolSlot>
          <ToolSlot><EyeBrush /></ToolSlot>
          <HBar />
          <ToolSlot><Trash2 size={19} strokeWidth={1} /></ToolSlot>
          <StarTile><Star size={17} strokeWidth={1} /></StarTile>
        </LeftBar>

        <ChartCol>
          <ChartBox>
            <Chart />
            <Legend>
              <LegendRow $fs={11.600} $g={3}>
                <Gold s={14} />
                <span>Micro Gold Futures · 1 · COMEX</span>
                <StatusPill><GreenDot />≈</StatusPill>
                <LegendRow $fs={10.800} $g={5}>
                  <span>O4,423.5</span><span>H4,423.5</span><span>L4,423.5</span><span>C4,423.5</span><span>+1.4 (+0.03%)</span>
                </LegendRow>
              </LegendRow>
              <LegendRow>
                <span>AsianRange Nico948 D 2000-0215</span><span>4,469.2</span><span>4,369.4</span>
              </LegendRow>
              <LegendRow>
                <span>VWAP Session</span>
                <Colored $c="#2962ff">4,416.2</Colored>
                <Colored $c="#f23645">4,439.3</Colored>
                <Colored $c="#4caf50">4,393.2</Colored>
                <Colored $c="#4caf50">4,462.3</Colored>
                <Colored $c="#f23645">4,370.2</Colored>
              </LegendRow>
              <CollapseBtn><ChevronUp size={11} /></CollapseBtn>
            </Legend>
            <UnitBox>
              <UnitRow>USD <ChevronDown size={8} /></UnitRow>
              <UnitRow>apoz <ChevronDown size={8} /></UnitRow>
            </UnitBox>
            <LogoWrap><TVGlyph w={25} h={13} /><LogoText>TradingView</LogoText></LogoWrap>
            <Flash><Zap size={9} /><FlashDot /></Flash>
          </ChartBox>
          <TimeAxis>
            {times.map(([t, b]) => <TimeLabel key={t} $b={b}>{t}</TimeLabel>)}
            <AxisGear><HexGear s={14} /></AxisGear>
          </TimeAxis>
          <BottomBar>
            {ranges.map(([t, w]) => <Range key={t} $w={w}>{t}</Range>)}
            <Slot $w={3} />
            <VBar />
            <Slot $w={34}><CalArrow /></Slot>
            <BottomRight>
              <span>12:29:05 UTC</span><span>ETH</span><VBar /><span>B-ADJ</span>
            </BottomRight>
          </BottomBar>
        </ChartCol>

        <Watch>
          <WatchHead>
            <Slot $w={30}>Wat...</Slot>
            <Slot $w={16}><ChevronDown size={10} /></Slot>
            <Slot $w={34}><Plus size={17} strokeWidth={1} /></Slot>
            <Slot $w={25}><Table2 size={16} strokeWidth={1} /></Slot>
            <Slot $w={34}><Ellipsis size={16} strokeWidth={1} /></Slot>
          </WatchHead>
          <ColHead><ColFlag /><span>Syn</span><span>Las</span><span>Ch</span><span>Chg%</span></ColHead>
          <Section $h={32}><ChevronDown size={11} strokeWidth={1.200} />INDICES</Section>
          {rows.map((r, i) => (
            <Row key={i}>
              {r.flag && <RowFlag />}
              {r.icon === "us" ? <USFlag /> : <RoundIcon $bg={iconBg[r.icon]}>{r.icon}</RoundIcon>}
              <RowSym>{r.sym}</RowSym>
              <RowClip><Colored $c={r.green ? GREEN : "#e8e8e8"}>{r.last}</Colored>{r.lastRed && <Colored $c={RED}>{r.lastRed}</Colored>}</RowClip>
              <RowClip><Colored $c={RED}>{r.ch}</Colored></RowClip>
              <RowPct $c={RED}>{r.pct}</RowPct>
            </Row>
          ))}
          <Section $h={27}><ChevronDown size={11} strokeWidth={1.200} />COMMODITIES</Section>
          <Row $sel>
            <Gold s={15} /><RowSym>X</RowSym><RowClip>4,429</RowClip><RowClip><Colored $c={GREEN}>50.9</Colored></RowClip><RowPct $c={GREEN}>1.16%</RowPct>
          </Row>
          <Row>
            <Gold s={15} /><RowSym>X</RowSym><RowClip>4,428</RowClip><RowClip><Colored $c={GREEN}>50.5</Colored></RowClip><RowPct $c={GREEN}>1.16%</RowPct>
          </Row>
          <Thick />
          <Details>
            <DetailHead>
              <Gold s={19} />
              <Slot $w={22}>M.</Slot>
              <Slot $w={44}><LayoutGrid size={16} strokeWidth={1} /></Slot>
              <Slot $w={14}><SquarePen size={15} strokeWidth={1} /></Slot>
              <Slot $w={33} $pl={15}><Ellipsis size={16} strokeWidth={1} /></Slot>
            </DetailHead>
            <DetailName>
              <DetailName2>Micro Gold Futures <ExternalLink size={10} strokeWidth={1} /> •</DetailName2>
              <div>COMEX</div>
              <Muted>Futures</Muted>
            </DetailName>
            <BigPrice>4,42<Colored $c={GREEN}>3.5</Colored><BigUnit>USD / APZ</BigUnit></BigPrice>
            <Change><span>+47.2</span><span>+1.08%</span></Change>
            <OpenRow><GreenDot />Market open</OpenRow>
            <News>
              <Colored $c="#8a5cf0"><Zap size={9} fill="currentColor" /></Colored>
              <Grow>
                <div>1 hour ago • Stocks</div>
                <div>resume slide as...</div>
              </Grow>
              <ChevronRight size={10} />
            </News>
          </Details>
        </Watch>

        <Rail>
          <RailSlot $active $h={30}><Watchlist /></RailSlot>
          <RailSpacer $h={2} />
          <RailSlot $h={36}><AlarmClock size={21} strokeWidth={1} /></RailSlot>
          <RailSlot $h={36}><Layers size={21} strokeWidth={1} /></RailSlot>
          <RailSlot $h={36}><MessagesSquare size={21} strokeWidth={1} /></RailSlot>
          <RailSpacer $h={171} />
          <RailSlot><Radar size={22} strokeWidth={1} /></RailSlot>
          <RailSlot><Mountains /></RailSlot>
          <RailSlot><Calendar size={21} strokeWidth={1} /></RailSlot>
          <RailSlot><Rss size={21} strokeWidth={1} /></RailSlot>
          <RailSlot><Bell size={21} strokeWidth={1} /></RailSlot>
          <GripCircle><Grip size={18} strokeWidth={2.500} /></GripCircle>
          <RailLine />
          <RailSlot><CircleHelp size={22} strokeWidth={1} /></RailSlot>
        </Rail>
      </Main>

      <Taskbar>
        <TaskIcon>
          <svg width="19" height="19" viewBox="0 0 20 20" fill="#4cc2f1"><rect width="9.500" height="9.500" /><rect x="10.500" width="9.500" height="9.500" /><rect y="10.500" width="9.500" height="9.500" fill="#2ea6e6" /><rect x="10.500" y="10.500" width="9.500" height="9.500" fill="#2ea6e6" /></svg>
        </TaskIcon>
        <TaskIcon><Search size={18} strokeWidth={1.800} color="#e8e8e8" /></TaskIcon>
        <TaskIcon>
          <svg width="20" height="17" viewBox="0 0 20 17"><path d="M0 1h7l2 2h11v14H0z" fill="#f2c43d" /><rect x="0" y="6" width="20" height="11" fill="#fcd860" /><rect x="6" y="11" width="10" height="6" fill="#2a7fc8" /></svg>
        </TaskIcon>
        <TaskIcon>
          <svg width="20" height="20" viewBox="0 0 20 20"><circle cx="10" cy="10" r="10" fill="#5865f2" /><path d="M5 6c3-1.300 7-1.300 10 0l2 6c-1.500 1.200-3 1.800-4 2l-1-1.500c-1.300.3-2.700.3-4 0L7 14c-1-.2-2.500-.8-4-2z" fill="#fff" /><circle cx="7.800" cy="10" r="1.200" fill="#5865f2" /><circle cx="12.200" cy="10" r="1.200" fill="#5865f2" /></svg>
          <CountBadge>9+</CountBadge>
          <Pip />
        </TaskIcon>
        <TaskIcon><Tile $bg="#111" $r={9} $fs={9}>G</Tile></TaskIcon>
        <TaskIcon>
          <svg width="19" height="19" viewBox="0 0 20 20"><circle cx="10" cy="11" r="9" fill="#f5792a" /><path d="M12 0c4 3 7 7 7 11l-6-3z" fill="#fcc23a" /><circle cx="10" cy="11" r="4.800" fill="#6a2fd0" /></svg>
          <Pip />
        </TaskIcon>
        <TaskIcon>
          <svg width="19" height="19" viewBox="0 0 20 20"><circle cx="10" cy="10" r="10" fill="#1ed760" /><path d="M5 7c3.500-1 7.500-.7 10.500 1M5.500 10.300c3-.8 6.500-.5 9 1M6 13.300c2.500-.6 5-.4 7.500.9" stroke="#123" strokeWidth="1.500" fill="none" strokeLinecap="round" /></svg>
        </TaskIcon>
        <TaskIcon $gl={-4} $gr={-4} $bg="linear-gradient(90deg,#4a4a68,#d8b5a6 25%,#d8b5a6 75%,#4a4a68)">
          <Tile $bg="#0c0c0c" $s={19} $r={4}><TVGlyph w={14} h={8} c="#fff" /></Tile>
          <Pip $on />
        </TaskIcon>
        <TaskIcon $gl={3} $gr={3} $bg="#6d3338">
          <Tile $bg="#0c1a0c" $c="#35e04a" $fs={6} $r={1}>MC</Tile>
          <Pip />
        </TaskIcon>
        <TaskIcon>
          <svg width="18" height="18" viewBox="0 0 20 20"><circle cx="10" cy="10" r="9" fill="#153040" stroke="#b89a5a" strokeWidth="1.500" /><path d="M6 3v14h8" stroke="#d0b060" strokeWidth="2" fill="none" /></svg>
        </TaskIcon>
        <TaskIcon>
          <Tile $bg="#1c1c26" $r={2} $c="#ff4655" $s={16}>
            <svg width="10" height="8" viewBox="0 0 10 8" fill="#ff4655"><path d="M0 0l5 8h3L0 0zM10 1L7 5h3z" /></svg>
          </Tile>
        </TaskIcon>
        <TaskIcon>
          <svg width="18" height="18" viewBox="0 0 20 20" fill="#2c7ae8"><path d="M0 4 20 1l-3 6h-5v12l-4-4V8z" /></svg>
          <Pip />
        </TaskIcon>
        <TaskIcon>
          <svg width="19" height="19" viewBox="0 0 20 20"><circle cx="10" cy="10" r="10" fill="#132a4c" /><circle cx="13" cy="7.500" r="3" fill="none" stroke="#eee" strokeWidth="1.300" /><circle cx="6" cy="13" r="2.200" fill="#eee" /><path d="M0 10l6 3 5-3" stroke="#eee" strokeWidth="1.500" fill="none" /></svg>
          <Pip />
        </TaskIcon>
        <Tray>
          <TraySlot><ChevronUp size={13} strokeWidth={1.800} /></TraySlot>
          <TraySlot $w={26}><Mic size={14} strokeWidth={1.300} color="#b8c8d8" /></TraySlot>
          <TraySlot><Wifi size={14} strokeWidth={1.500} /></TraySlot>
          <TraySlot $w={16}><Volume2 size={14} strokeWidth={1.500} /></TraySlot>
          <TraySlot $w={24}>
            <svg width="17" height="12" viewBox="0 0 17 12" fill="none"><rect x="0.500" y="3.500" width="14" height="8" rx="2" fill="#a8dca0" stroke="#ddd" /><rect x="15" y="6" width="1.500" height="3" fill="#ddd" /><path d="M7.500 1v6M5.500 5l2 2 2-2" stroke="#123" /></svg>
          </TraySlot>
          <Clock><div>12:29</div><div>27/03/2026</div></Clock>
        </Tray>
      </Taskbar>
    </Page>
  );
}
